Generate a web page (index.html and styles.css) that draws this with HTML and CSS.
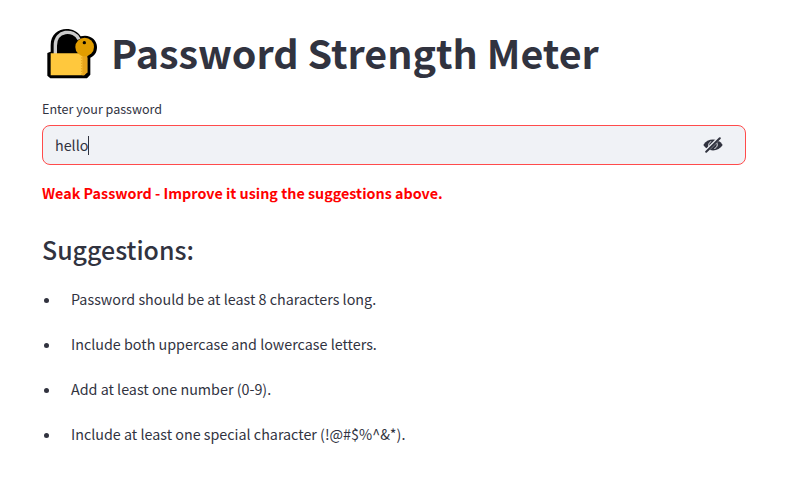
FILE: index.html
```html
<!DOCTYPE html>
<html lang="en">
<head>
<meta charset="utf-8">
<title>Password Strength Meter</title>
<link rel="stylesheet" href="styles.css">
</head>
<body>
<main class="page">
  <h1 class="title">
    <svg class="lock" viewBox="18 21 180 162" aria-hidden="true">
      <path d="M44 95V76C44 16 116 16 134 49C160 41 183 58 183 81C183 98 175 108 163 113V164L153 175H43L34 167V99Z" fill="#000"/>
      <path d="M58 102V77C58 29 114 26 129 58" fill="none" stroke="#ccc" stroke-width="10"/>
      <path d="M44 100H137L154 113V157L144 166H44Z" fill="#ffc83d"/>
      <path d="M139 108H154V157L145 166H139Z" fill="#e8a51c"/>
      <path d="M137 112V166" stroke="#e5a31a" stroke-width="3" stroke-dasharray="4 4"/>
      <circle cx="146" cy="81" r="28" fill="#e19d00"/>
      <circle cx="145" cy="68" r="5" fill="#000"/>
    </svg>
    <span class="title-text">Password Strength Meter</span>
  </h1>
  <label class="label">Enter your password</label>
  <div class="field">
    <span class="value">hello</span><span class="caret"></span>
    <svg class="eye" viewBox="0 0 20 16" aria-hidden="true">
      <path d="M0.3 8C4.5 0.8 15.5 0.8 19.7 8C15.5 15.2 4.5 15.2 0.3 8Z" fill="#31333f"/>
      <path d="M8.2 4.6C5.6 5.4 5 8.8 6.6 10.6" fill="none" stroke="#f0f2f6" stroke-width="1"/>
      <path d="M13.6 5.6C15 7.6 14 10.8 11.4 11.5" fill="none" stroke="#f0f2f6" stroke-width="1"/>
      <path d="M2.7 14.6L16.7 0.6" stroke="#f0f2f6" stroke-width="3.6"/>
      <path d="M3.2 14.8L16.8 1.2" stroke="#31333f" stroke-width="2" stroke-linecap="round"/>
    </svg>
  </div>
  <p class="verdict">Weak Password - Improve it using the suggestions above.</p>
  <h2 class="subtitle">Suggestions:</h2>
  <ul class="list">
    <li>Password should be at least 8 characters long.</li>
    <li>Include both uppercase and lowercase letters.</li>
    <li>Add at least one number (0-9).</li>
    <li>Include at least one special character (!@#$%^&amp;*).</li>
  </ul>
</main>
</body>
</html>
```
FILE: styles.css
```css
body { margin: 0; background: #fff; color: #31333f; font-family: "Noto Sans CJK SC", sans-serif; }
.page { padding: 27px 48px 0 42px; }
.title { display: flex; margin: 0; height: 54px; font-size: 39.45px; line-height: 49px; font-weight: 700; }
.lock { flex: none; width: 60px; height: 54px; margin-right: 9px; }
.label { display: block; margin-top: 18px; font-size: 12.55px; line-height: 20px; }
.field { display: flex; align-items: center; box-sizing: border-box; height: 40px; margin-top: 6px; padding: 0 22px 0 12px; border: 1px solid #ff4b4b; border-radius: 8px; background: #f0f2f6; font-size: 14.32px; }
.value { padding-bottom: 2px; }
.caret { width: 1px; height: 19px; margin-left: -0.2px; background: #31333f; }
.eye { width: 20px; height: 16px; margin-left: auto; }
.verdict { margin: 16px 0 0; font-size: 14.33px; line-height: 24px; font-weight: 700; color: #f00; }
.subtitle { margin: 27px 0 0; font-size: 24.95px; line-height: 34px; font-weight: 500; }
.list { margin: 21px 0 0; padding: 0; list-style: none; font-size: 14.32px; line-height: 24px; }
.list li { display: flex; align-items: center; margin-bottom: 21px; }
.list li::before { content: ""; width: 5px; height: 5px; margin: 2px 22px 0 2px; border-radius: 50%; background: #31333f; }
```
